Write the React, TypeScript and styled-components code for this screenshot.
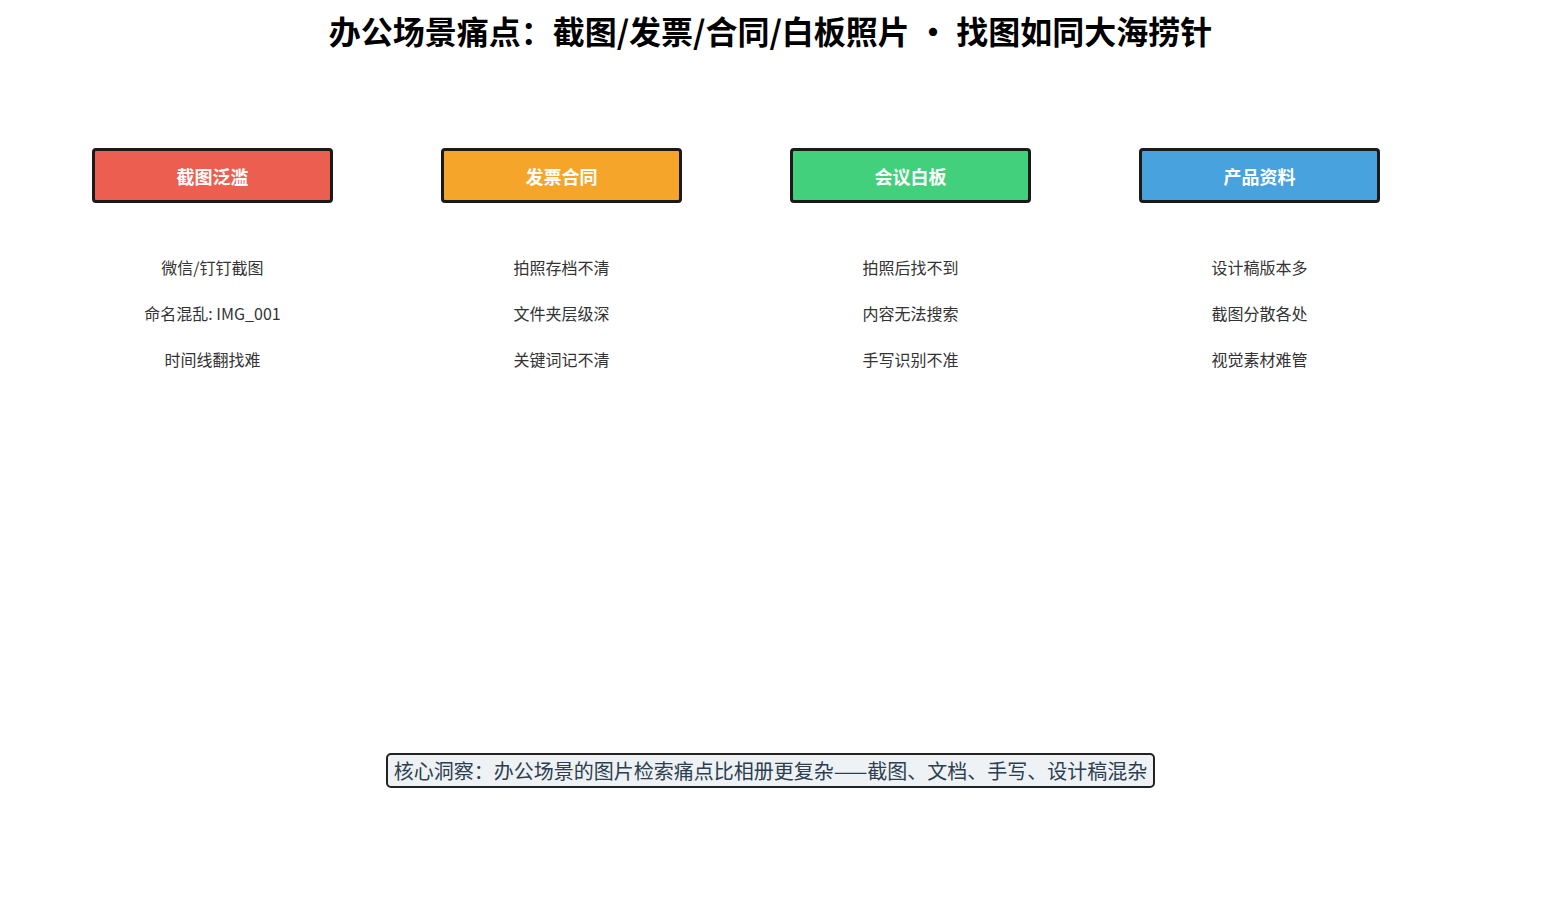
import React from "react";
import styled, { createGlobalStyle } from "styled-components";

const Global = createGlobalStyle`
  body { margin: 0; background: #fff; font-family: "Noto Sans CJK SC", "Noto Sans", sans-serif; }
`;

const Page = styled.div`
  width: 1541px; height: 906px; display: flex; flex-direction: column; align-items: center;
`;
const Title = styled.h1`
  margin: 8px 0 0; font-size: 32px; font-weight: 700; color: #000; line-height: 44px; height: 44px;
`;
const Grid = styled.div`
  align-self: flex-start; margin: 96px 0 0 92px; display: grid; grid-template-columns: repeat(4, 241px); column-gap: 108px;
`;
const Column = styled.div`
  display: flex; flex-direction: column; align-items: center;
`;
const Card = styled.div<{ $bg: string }>`
  box-sizing: border-box; width: 241px; height: 55px; background: ${p => p.$bg};
  border: 3px solid #1a1a1a; border-radius: 4px; display: flex; align-items: center; justify-content: center;
  color: #fff; font-size: 18px; font-weight: 700;
`;
const Items = styled.div`
  margin-top: 52px; display: flex; flex-direction: column; align-items: center; gap: 22px;
`;
const Item = styled.div`
  font-size: 16px; line-height: 24px; color: #333;
`;
const Insight = styled.div`
  margin-top: 382px; box-sizing: border-box; height: 35px; padding: 0 6px; border: 2px solid #222; border-radius: 5px;
  background: #eef2f5; color: #2c3e50; font-size: 20px; display: flex; align-items: center; line-height: 1;
`;

const cols = [
  { t: "截图泛滥", c: "#eb5e50", i: ["微信/钉钉截图", "命名混乱: IMG_001", "时间线翻找难"] },
  { t: "发票合同", c: "#f5a52a", i: ["拍照存档不清", "文件夹层级深", "关键词记不清"] },
  { t: "会议白板", c: "#42d07c", i: ["拍照后找不到", "内容无法搜索", "手写识别不准"] },
  { t: "产品资料", c: "#48a2de", i: ["设计稿版本多", "截图分散各处", "视觉素材难管"] },
];

export default function App() {
  return (
    <Page>
      <Global />
      <Title>办公场景痛点：截图/发票/合同/白板照片 • 找图如同大海捞针</Title>
      <Grid>
        {cols.map(col => (
          <Column key={col.t}>
            <Card $bg={col.c}>{col.t}</Card>
            <Items>{col.i.map(x => <Item key={x}>{x}</Item>)}</Items>
          </Column>
        ))}
      </Grid>
      <Insight>核心洞察：办公场景的图片检索痛点比相册更复杂——截图、文档、手写、设计稿混杂</Insight>
    </Page>
  );
}
